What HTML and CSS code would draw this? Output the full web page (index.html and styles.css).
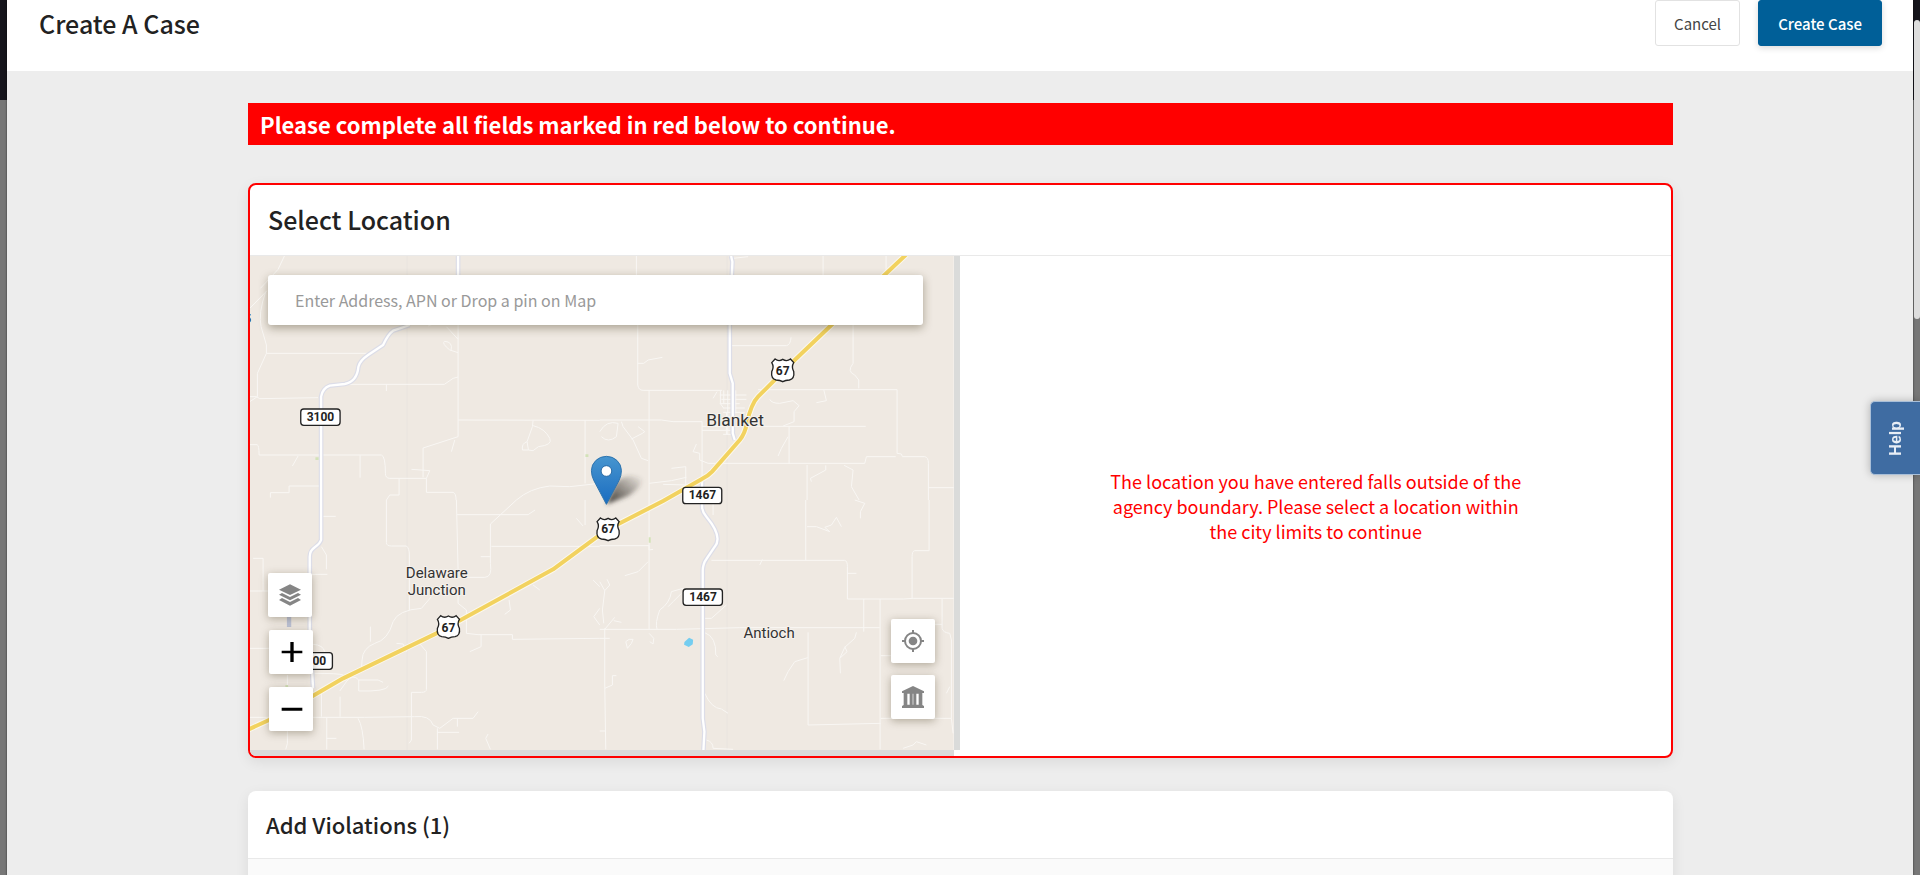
FILE: index.html
```html
<!DOCTYPE html>
<html lang="en">
<head>
<meta charset="utf-8">
<title>Create A Case</title>
<link rel="stylesheet" href="styles.css">
</head>
<body>
<div class="backdrop">
  <div class="modal">
    <header class="modal-header">
      <h1 class="modal-title">Create A Case</h1>
      <div class="actions">
        <button type="button" class="btn">Cancel</button>
        <button type="button" class="btn btn-primary">Create Case</button>
      </div>
    </header>
    <main class="content">
      <p class="alert" role="alert">Please complete all fields marked in red below to continue.</p>

      <section class="card card-invalid">
        <h2 class="card-title">Select Location</h2>
        <div class="location">
          <div class="map-pane">
            <div class="map">
              <svg class="map-art" viewBox="30 48 2112 1482" preserveAspectRatio="xMidYMid slice" role="img" aria-label="Map around Blanket">
                <defs>
                  <linearGradient id="pin" x1="0" y1="0" x2="0" y2="1"><stop offset="0" stop-color="#4795cf"/><stop offset="1" stop-color="#1a6cc0"/></linearGradient>
                  <linearGradient id="shade" x1="0" y1="1" x2="1" y2="0"><stop offset="0" stop-color="#3a3630"/><stop offset="1" stop-color="#3a3630" stop-opacity="0"/></linearGradient>
                  <filter id="soft" x="-50%" y="-50%" width="200%" height="200%"><feGaussianBlur stdDeviation="7"/></filter>
                  <path id="us" d="M-33-23 L-23-34 Q-12-25 0-33 Q12-25 23-34 L33-23 Q25-10 33 4 Q36 25 20 29 Q8 29 0 34 Q-8 29-20 29 Q-36 25-33 4 Q-25-10-33-23Z"/>
                </defs>
                <rect x="30" y="48" width="2112" height="1482" fill="#efe9e2"/>
                <g class="tile-seam"><path d="M502 48V1530M1462 48V1530"/></g>
                <g class="lane">
                  <path d="M134 48L115 88 62 145M82 152L30 205M78 155Q55 220 64 260L80 315V340L53 400V470L30 485M30 470H50L60 476 235 473M80 340H385M325 433H614L640 415 655 411M440 432V453M655 250V590L550 624V712M645 600L635 635M655 540L1080 541M620 260L655 298M655 338L630 330Q605 310 614 304Q640 305 634 330M565 258L580 252M880 541L878 560L862 605 866 630 880 632 896 620Q940 615 930 595Q915 565 880 557M862 605Q845 610 848 630H866M1036 541V730M30 614H52Q58 615 58 645H425Q437 648 437 700Q437 715 450 715H560L570 692 515 688M361 646V713M175 648L158 678M242 738H148V758H92V773M478 716V765H450L440 780M560 715V757H640Q649 760 649 780M830 780Q870 745 930 738L990 740 1080 730"/>
                  <g transform="translate(0 780)"><path d="M248 49H288M440 0V128Q440 138 455 138H500Q509 145 509 165V330M650 0L655 210M652 44H865L886 30M830 0L752 72V190Q758 232 735 232H655M755 139H1080M1036 0V75M1010 55L1030 78M723 170H753M40 175H70V273M30 273H85M215 223H263M245 140L260 165V208M30 445H88M575 290L545 325Q475 330 460 365Q445 420 405 430Q368 445 367 480L365 510M392 380V425M470 430L490 432 500 455M655 260V310L680 330V400L715 404H818V418L1080 415M724 405V440L690 455M535 425L560 455V568Q560 577 545 577H515V720L508 730M808 300L812 330 795 343M880 255L900 270M220 433Q250 435 255 455M220 520Q300 520 310 525L320 545 300 573M320 545Q340 520 357 540V573Q440 575 446 558M357 540H415L430 547M245 580V650M301 590V650M30 652H375L525 650Q570 645 580 675L600 685 640 655H700L715 635M355 655Q370 680 373 748M261 653V748M261 715H290M593 685V748M593 697H658M653 655V680M745 702L738 715 752 748M143 690V730L138 748M143 525V560M1060 240L1080 260M1080 325L1062 350 1080 375"/></g>
                  <g transform="translate(1080 0)"><path d="M110 48V105M114 255V435Q116 451 130 451H367M400 55L445 50M670 48V105M859 48V105M760 255V370Q740 395 765 405L777 420V445M114 370H132L145 360 188 352M396 317H560Q572 315 574 292M475 449H892V640L905 642 908 650H975Q986 652 986 670V780M888 650H800L795 670H325L300 660V640L280 635 290 612M148 451V780M0 540H185L220 545H307V740M307 559H798M307 571H400M568 560V672M565 590L545 625 535 648M622 675V780M678 676V690L632 715 635 725M733 676L760 690 755 740 778 780M986 743H1062M672 449L680 482 650 488M510 478Q515 490 540 490L580 482 598 497 583 515V545L550 558M65 545L70 560 100 600 125 655 145 662M115 560L135 575 128 580 95 597M0 575Q20 540 55 550L50 590Q25 610 5 590M148 730L215 722 260 712M215 685L258 680V735L190 733M340 475L352 455M440 465H360M440 478H365M420 491H360M435 504H370M435 517H370M375 530H410M370 583H400M362 451V491L372 505M372 451V491M384 451V583M408 451V520M380 517V583"/></g>
                  <g transform="translate(1080 780)"><path d="M148 0V388M0 137H148V150L160 148M145 185L115 215 75 227M0 388H230L420 383H840M335 181H735Q743 183 743 200V297H910L940 295H1062M618 0V181M988 0V152H945Q937 153 937 170V295M340 10V45M743 220H770M792 297V395M841 297V748M1027 297V385Q1030 398 1050 400L1055 420V655L1060 700M1000 373H1027M622 80H650L690 95 675 82 695 75 710 52 725 80M765 0L795 10 782 35V55M480 195L488 178M625 397V675L843 670M843 655H1055M770 397L765 415 735 442 720 475 722 520M735 440L742 455 720 475M624 473L585 485 565 515 552 542M843 467H875M380 315L335 355H315M250 265L215 275Q210 310 180 330Q165 370 172 388M245 280L220 305 205 320M315 398Q350 410 348 465L354 470M315 580Q335 625 365 627L385 640M320 720Q340 725 340 745L400 748M15 385V555L18 748M0 245L15 272 30 255 22 238M15 272L8 330 12 370M15 388L45 352M42 362L65 367M0 415H30M15 565L38 555V527H50M83 445L78 425 88 418H100L95 430 83 445M150 425L160 432 162 415 148 400M0 693H17M910 745L940 735 950 725 980 735M1040 580L1050 560"/></g>
                </g>
                <g class="park"><path d="M227 652h10v8h-10zM1037 643h9v8h-9zM1227 892h6v16h-6zM137 1335h8v8h-8z"/></g>
                <path d="M1334 1206l14-13 12 6-1 14-12 8-14-7z" fill="#74cdf0"/>
                <g class="county-case">
                  <path id="r1" d="M655 48V105M510 255L460 272Q445 282 430 315L385 345Q360 362 356 380Q352 425 315 432L270 437Q248 445 244 470V900Q240 912 225 922Q210 932 210 950V1180L220 1345"/>
                  <path id="r2" d="M1474 48L1478 65 1470 255V400L1479 430V580L1485 600"/>
                  <path id="r3" d="M1387 720V800Q1387 815 1400 830Q1450 890 1425 920L1400 957Q1390 970 1389 990V1435L1394 1475 1391 1530"/>
                </g>
                <g class="county-fill">
                  <use href="#r1"/><use href="#r2"/><use href="#r3"/>
                </g>
                <path d="M148 1125V1161" stroke="#bcc2d6" stroke-width="13"/>
                <g class="highway">
                  <path class="highway-case" d="M20 1471L88 1440 220 1367 310 1315 590 1180 940 988 1070 892 1130 855 1270 783 1385 718Q1405 708 1417 695L1500 600Q1516 580 1521 550Q1535 490 1555 470L1665 360 1775 255 2000 43"/>
                  <path class="highway-fill" d="M20 1471L88 1440 220 1367 310 1315 590 1180 940 988 1070 892 1130 855 1270 783 1385 718Q1405 708 1417 695L1500 600Q1516 580 1521 550Q1535 490 1555 470L1665 360 1775 255 2000 43"/>
                </g>
                <g class="shield">
                  <rect x="183" y="507" width="118" height="49" rx="9"/>
                  <rect x="159" y="1238" width="119" height="50" rx="9"/>
                  <rect x="1329" y="742" width="117" height="49" rx="9"/>
                  <rect x="1330" y="1047" width="118" height="49" rx="9"/>
                  <use href="#us" x="1629" y="391"/>
                  <use href="#us" x="1105" y="868"/>
                  <use href="#us" x="626" y="1161"/>
                </g>
                <g class="shield-text">
                  <text x="242" y="544">3100</text>
                  <text x="218" y="1275">3100</text>
                  <text x="1388" y="778">1467</text>
                  <text x="1390" y="1083">1467</text>
                  <text x="1629" y="405">67</text>
                  <text x="1105" y="880">67</text>
                  <text x="626" y="1175">67</text>
                  <text x="24" y="249">5</text>
                </g>
                <g class="place">
                  <text class="place-town" x="1486" y="559">Blanket</text>
                  <text x="591" y="1013">Delaware</text>
                  <text x="591" y="1066">Junction</text>
                  <text x="1588" y="1193">Antioch</text>
                </g>
                <path d="M1100 793L1130 725Q1165 695 1205 715Q1210 740 1165 768Z" fill="url(#shade)" filter="url(#soft)"/>
                <path d="M1100 793L1062 721Q1055 707 1055 692A45 43 0 0 1 1145 692Q1145 707 1138 721Z" fill="url(#pin)" stroke="#2e74ae" stroke-width="3"/>
                <circle cx="1100" cy="693" r="16" fill="#fff" stroke="#2a6ba5" stroke-width="3"/>
              </svg>
              <input class="search" type="text" aria-label="Location" placeholder="Enter Address, APN or Drop a pin on Map">
              <div class="tools tools-left">
                <button type="button" class="tool" aria-label="Layers"><svg viewBox="0 0 66 66"><path d="M33 1L66 17 33 33 0 17Z"/><path d="M9 27L33 39 57 27 66 32 33 49 0 32Z"/><path d="M9 42L33 54 57 42 66 48 33 65 0 48Z"/></svg></button>
                <button type="button" class="tool tool-zoom" aria-label="Zoom in"><svg viewBox="0 0 66 66"><path d="M2 29H28V3H38V29H64V37H38V63H28V37H2Z"/></svg></button>
                <button type="button" class="tool tool-zoom" aria-label="Zoom out"><svg viewBox="0 0 66 66"><path d="M2 29H64V38H2Z"/></svg></button>
              </div>
              <div class="tools tools-right">
                <button type="button" class="tool" aria-label="My location"><svg viewBox="0 0 66 66"><circle cx="33" cy="33" r="13"/><circle cx="33" cy="33" r="24" fill="none" stroke="#858585" stroke-width="6"/><path d="M30 0h6v12h-6zM30 54h6v12h-6zM0 30h12v6H0zM54 30h12v6H54z"/></svg></button>
                <button type="button" class="tool" aria-label="City boundary"><svg viewBox="0 0 66 66"><path d="M33 0L66 16V21H61V57L66 60V66H0V60L5 57V21H0V16ZM16 23V56H23V23ZM32 23V56H34V23ZM43 23V56H50V23Z" fill-rule="evenodd"/></svg></button>
              </div>
            </div>
          </div>
          <div class="message-pane">
            <p class="message">The location you have entered falls outside of the agency boundary. Please select a location within the city limits to continue</p>
          </div>
        </div>
      </section>

      <section class="card">
        <h2 class="card-title card-title-small">Add Violations (1)</h2>
        <div class="card-body"></div>
      </section>
    </main>
  </div>
  <div class="scroll-thumb"></div>
  <button type="button" class="help"><span class="help-label">Help</span></button>
</div>
</body>
</html>
```
FILE: styles.css
```css
* { box-sizing: border-box; }
body {
  margin: 0;
  font-family: "Noto Sans CJK SC", "Noto Sans", sans-serif;
  color: #222;
}
h1, h2, p { margin: 0; font-weight: 500; }
button, input { font-family: inherit; margin: 0; }

.backdrop {
  height: 100vh;
  overflow: hidden;
  padding: 0 7px;
  background: linear-gradient(#16151c 100px, #777 100px);
}
.modal {
  min-height: 100%;
  background: #ededed;
  box-shadow: 0 0 2px rgba(0, 0, 0, .6);
}
.modal-header {
  display: flex;
  justify-content: space-between;
  align-items: flex-start;
  height: 71px;
  padding: 0 31px 0 32px;
  background: #fff;
}
.modal-title { font-size: 25px; line-height: 46px; }
.actions { display: flex; gap: 18px; }
.btn {
  height: 46px;
  padding: 0 18px;
  border: 1px solid #e2e2e2;
  border-radius: 3px;
  background: #fff;
  color: #444;
  font-size: 15px;
}
.btn-primary {
  padding: 0 19px;
  border-color: #005f98;
  background: #005f98;
  color: #fff;
  font-weight: 500;
  box-shadow: 0 2px 6px rgba(0, 0, 0, .15);
}

.content { padding: 32px 240px 0 241px; }
.alert {
  padding: 0 12px;
  background: #f00;
  color: #fff;
  font-size: 22px;
  font-weight: 700;
  line-height: 42px;
}
.card {
  margin-top: 33px;
  overflow: hidden;
  border-radius: 8px;
  background: #fff;
  box-shadow: 0 4px 14px rgba(0, 0, 0, .08);
}
.card-invalid {
  margin-top: 38px;
  border: 2px solid #f00;
}
.card-title {
  height: 71px;
  padding: 0 18px;
  border-bottom: 1px solid #e9e9e9;
  font-size: 25px;
  line-height: 68px;
}
.card-title-small { height: 68px; font-size: 22px; line-height: 67px; }
.card-body { height: 60px; background: #fafafa; }

.location { display: grid; grid-template-columns: 1fr 1fr; }
.map-pane { padding: 0 7px 6px 0; }
.map {
  position: relative;
  height: 494px;
  box-shadow: 6px 0 #dadbda, 0 6px #dadada;
}
.map-art { display: block; width: 100%; height: 100%; }
.tile-seam { fill: none; stroke: #e8e4de; stroke-width: 2; }
.lane { fill: none; stroke: #f9f7f4; stroke-width: 3; stroke-linejoin: round; }
.park { fill: #d3e2b8; }
.county-case { fill: none; stroke: #dcdde8; stroke-width: 14; }
.county-case, .county-fill { stroke-linejoin: round; }
.county-fill { fill: none; stroke: #fff; }
.county-case path { stroke: inherit; }
.highway { fill: none; stroke-linejoin: round; }
.highway-case { stroke: #fbf8ee; stroke-width: 18; }
.highway-fill { stroke: #f2d25f; stroke-width: 12; }
.county-fill { stroke-width: 7; }
.shield { fill: #fff; stroke: #222; stroke-width: 4; }
.shield-text {
  fill: #222;
  font: 700 36px Roboto, sans-serif;
  text-anchor: middle;
}
.place {
  fill: #333;
  stroke: #f5f1ec;
  stroke-width: 6px;
  paint-order: stroke;
  font: 400 45px Roboto, sans-serif;
  text-anchor: middle;
}
.place-town { font-size: 52px; }

.search {
  position: absolute;
  top: 19px;
  left: 18px;
  right: 31px;
  height: 50px;
  padding: 0 27px;
  border: 0;
  border-radius: 3px;
  background: #fff;
  box-shadow: 0 3px 10px rgba(60, 50, 20, .4);
  font-size: 16px;
}
.search::placeholder { color: #999; opacity: 1; }
.tools {
  position: absolute;
  display: flex;
  flex-direction: column;
  gap: 13px;
}
.tools-left { left: 18px; bottom: 19px; }
.tools-right { right: 19px; bottom: 31px; gap: 12px; }
.tool {
  display: grid;
  place-items: center;
  width: 44px;
  height: 44px;
  padding: 0;
  border: 0;
  border-radius: 2px;
  background: #fff;
  fill: #858585;
  box-shadow: 0 2px 8px rgba(60, 50, 20, .35);
}
.tool svg { width: 22px; height: 22px; }
.tool-zoom { margin-left: 1px; padding-left: 2px; fill: #000; }

.message-pane { display: grid; place-items: center; }
.message {
  max-width: 430px;
  color: #f00;
  font-size: 18px;
  font-weight: 400;
  line-height: 25px;
  text-align: center;
}

.scroll-thumb {
  position: fixed;
  top: 20px;
  right: 0;
  width: 6px;
  height: 299px;
  border-radius: 3px;
  background: #ddd;
}
.help {
  position: fixed;
  top: 401px;
  right: 0;
  display: grid;
  place-items: center;
  width: 50px;
  height: 74px;
  padding: 0;
  border: 1px solid #a9bfd8;
  border-right: 0;
  border-radius: 5px 0 0 5px;
  background: #3f6ca2;
  color: #e8eef6;
  box-shadow: 0 0 8px rgba(0, 0, 0, .25);
}
.help-label {
  font: 700 16px "Liberation Sans", Arial, sans-serif;
  writing-mode: vertical-rl;
  transform: rotate(180deg);
}
```
